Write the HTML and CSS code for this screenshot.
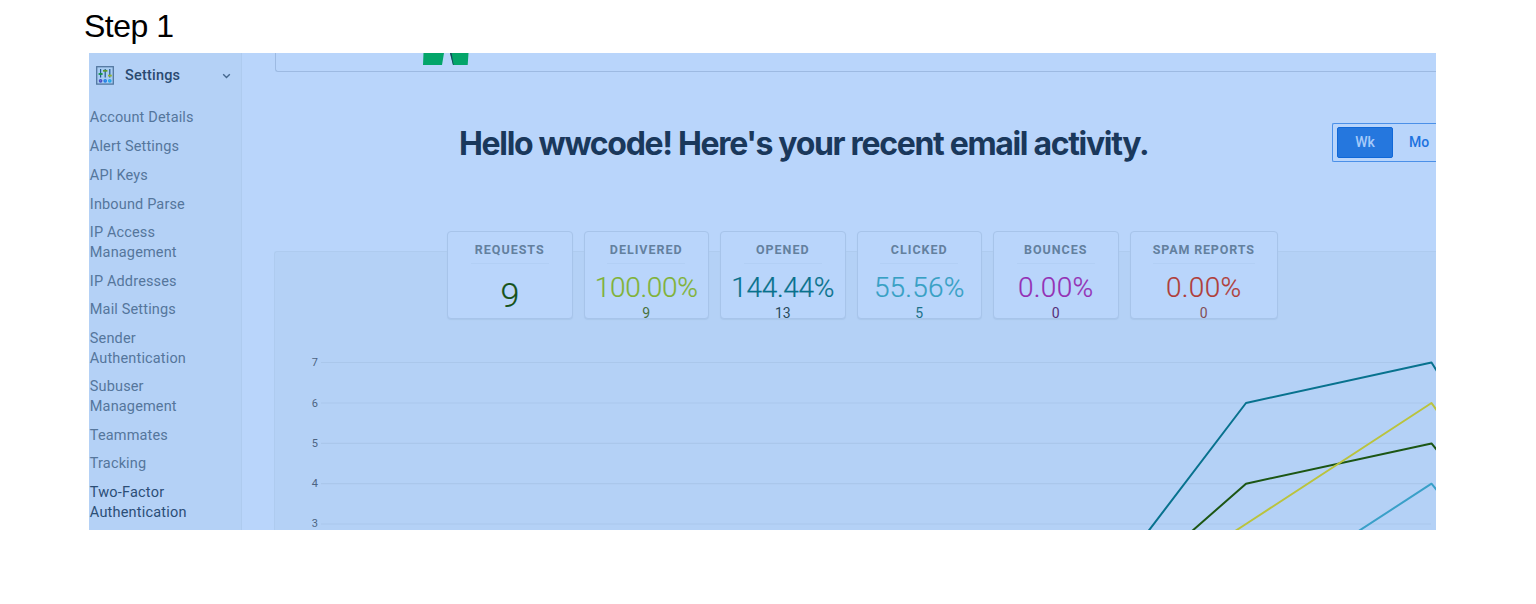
FILE: index.html
```html
<!DOCTYPE html>
<html lang="en">
<head>
<meta charset="utf-8">
<title>Step 1</title>
<link rel="stylesheet" href="styles.css">
</head>
<body>
<h2 class="step">Step 1</h2>
<div class="app">
  <nav class="sidebar">
    <div class="sidebar-head">
      <svg class="settings-icon" width="18" height="19" viewBox="0 0 18 19">
        <rect x="0.7" y="0.7" width="16.6" height="17.4" fill="#a9cdf3" stroke="#52779f" stroke-width="1.3"/>
        <g fill="none" stroke-width="1.2">
          <path stroke="#24588a" d="M4.6 3v8.5M9.2 3v8.5M13.8 3v8.5"/>
          <path stroke="#139344" stroke-width="1.8" d="M2.6 8h4"/>
          <path stroke="#5d9b29" stroke-width="1.8" d="M7 4.800h4.400"/>
          <path stroke="#94b62c" stroke-width="1.8" d="M12 9.600h3.800"/>
          <circle cx="4.6" cy="14.8" r="1.1" stroke-width="1.5" stroke="#4b4fc4"/>
          <circle cx="9.2" cy="14.8" r="1.1" stroke-width="1.5" stroke="#2380e5"/>
          <circle cx="13.8" cy="14.8" r="1.1" stroke-width="1.5" stroke="#23a7e8"/>
        </g>
      </svg>
      <span class="sidebar-title">Settings</span>
      <svg class="chevron" width="9" height="6" viewBox="0 0 9 6"><path d="M1.200 1.200 4.500 4.400 7.800 1.200" fill="none" stroke="#45678d" stroke-width="1.4"/></svg>
    </div>
    <ul class="links">
      <li>Account Details</li>
      <li>Alert Settings</li>
      <li>API Keys</li>
      <li>Inbound Parse</li>
      <li>IP Access<br>Management</li>
      <li>IP Addresses</li>
      <li>Mail Settings</li>
      <li>Sender<br>Authentication</li>
      <li>Subuser<br>Management</li>
      <li>Teammates</li>
      <li>Tracking</li>
      <li class="active">Two-Factor<br>Authentication</li>
    </ul>
  </nav>
  <main class="main">
    <div class="banner">
      <svg width="46" height="12" viewBox="0 0 46 12"><path fill="#03a569" d="M.5 0h20.500l-2 12H0zM27 0h18.500l-.8 12H30z"/><path fill="#16465f" d="M27 0h1.500l2.200 12H30z"/></svg>
    </div>
    <div class="intro">
      <h1 class="greeting">Hello wwcode! Here's your recent email activity.</h1>
      <div class="range"><span class="range-item selected">Wk</span><span class="range-item">Mo</span></div>
    </div>
    <div class="cards">
      <div class="card requests"><h3>REQUESTS</h3><b>9</b></div>
      <div class="card delivered"><h3>DELIVERED</h3><b>100.00%</b><i>9</i></div>
      <div class="card opened"><h3>OPENED</h3><b>144.44%</b><i>13</i></div>
      <div class="card clicked"><h3>CLICKED</h3><b>55.56%</b><i>5</i></div>
      <div class="card bounces"><h3>BOUNCES</h3><b>0.00%</b><i>0</i></div>
      <div class="card spam"><h3>SPAM REPORTS</h3><b>0.00%</b><i>0</i></div>
    </div>
    <div class="panel">
      <svg class="chart" width="1161" height="278" viewBox="275 252 1161 278">
        <path class="grid" d="M321 362.500H1431M321 403H1431M321 443.400H1431M321 483.700H1431M321 524H1431"/>
        <g class="axis">
          <text x="318" y="365.500">7</text>
          <text x="318" y="406.500">6</text>
          <text x="318" y="446.500">5</text>
          <text x="318" y="487">4</text>
          <text x="318" y="527">3</text>
        </g>
        <g class="series">
          <path stroke="#3aa0c8" d="M1334 547 1431.500 483.700 1445 500"/>
          <path stroke="#1c5614" d="M1175 546 1246 483.700 1431.500 443.400 1445 460"/>
          <path stroke="#bac33d" d="M1209 548 1246 524 1431.500 403 1445 422"/>
          <path stroke="#08728e" d="M1137 546 1246 403 1431.500 362.500 1445 384"/>
        </g>
      </svg>
    </div>
  </main>
</div>
</body>
</html>
```
FILE: styles.css
```css
body { margin: 0; background: #fff; font-family: Roboto, "Liberation Sans", sans-serif; }
.step { margin: 0; padding: 8px 0 0 84px; height: 53px; box-sizing: border-box; font: 400 32px/37px "Liberation Sans", Arial, sans-serif; letter-spacing: -0.5px; color: #000; }
.app { display: flex; width: 1347px; height: 477px; margin-left: 89px; overflow: hidden; background: #b9d5fb; }
.sidebar { flex: none; box-sizing: border-box; width: 153px; background: #b4d1f6; border-right: 1px solid #aecbef; }
.sidebar-head { display: flex; align-items: center; height: 45px; padding: 0 9px 0 7px; }
.sidebar-title { flex: 1; margin-left: 11px; font-size: 14.5px; font-weight: 500; letter-spacing: 0.2px; color: #2a4a70; }
.links { list-style: none; margin: 0; padding: 10.3px 0 0 0.8px; display: grid; gap: 9.27px; font-size: 14.5px; line-height: 19.5px; letter-spacing: 0.15px; color: #55769c; }
.active { color: #2b4e76; letter-spacing: 0.2px; }
.main { flex: 1; min-width: 0; display: flex; flex-direction: column; }
.banner { box-sizing: border-box; height: 19px; margin-left: 32.5px; padding-left: 147px; border: solid #9dbae2; border-width: 0 0 1.5px 1px; border-bottom-left-radius: 3px; }
.banner svg { display: block; }
.chevron { margin-right: 1px; }
.intro { display: flex; box-sizing: border-box; height: 159px; padding: 51px 0 0 217px; }
.greeting { flex: 1; margin: 0; padding-top: 1px; font-family: Inter, Roboto, sans-serif; font-size: 32px; line-height: 40px; font-weight: 700; letter-spacing: -1.33px; white-space: nowrap; color: #1a385b; }
.range { display: flex; box-sizing: border-box; width: 104px; height: 39px; padding: 3px 0 3px 4px; border: 1px solid #4b90e8; border-right: 0; border-radius: 2px 0 0 2px; font-size: 14px; font-weight: 500; line-height: 30px; color: #1d72df; overflow: hidden; }
.range-item { flex: none; width: 52px; text-align: center; }
.selected { box-sizing: border-box; width: 56px; height: 31px; line-height: 28px; border: 1px solid #1068d8; border-radius: 2px; background: #2577de; color: #a5cafa; }
.cards { position: relative; display: flex; gap: 11px; height: 88.5px; padding-left: 205px; }
.card { box-sizing: border-box; width: 125.5px; height: 88px; display: flex; flex-direction: column; align-items: center; border: 1px solid #a7c4ea; border-radius: 4px; background: #b9d5fb; box-shadow: 0 1px 1px #a9c7ec; }
.card h3 { box-sizing: border-box; height: 32px; margin: 0; padding: 7px 0; min-width: 78px; text-align: center; border-bottom: 1px solid #b2cff5; font-size: 12.5px; line-height: 21px; font-weight: 700; letter-spacing: 1px; color: #63809e; }
.card b { font-size: 28px; line-height: 34px; margin-top: 7px; font-weight: 300; letter-spacing: -0.3px; -webkit-text-stroke: 0.2px currentColor; }
.card i { font-size: 14px; line-height: 16px; font-style: normal; font-weight: 400; }
.card.requests b { font-size: 34px; margin-top: 14px; color: #155217; }
.delivered b { color: #80b236; }
.delivered i { color: #48713d; }
.opened b { color: #08718c; }
.opened i { color: #294a5c; }
.card.clicked b { color: #36a0c4; letter-spacing: 0.2px; }
.clicked i { color: #1c7189; }
.bounces b { color: #942fb4; }
.bounces i { color: #562e79; }
.card.spam { width: 148.5px; }
.card.spam h3 { letter-spacing: 0.85px; }
.spam b { color: #b03d38; }
.spam i { color: #834e56; }
.card.bounces b, .card.spam b { letter-spacing: 0.3px; }
.panel { flex: none; height: 279px; box-sizing: border-box; margin: -68.5px 0 0 32px; border: solid #aecbef; border-width: 1px 0 0 1px; border-top-left-radius: 3px; background: #b4d1f6; }
.chart { display: block; }
.grid { stroke: #aac7eb; stroke-width: 1.2; fill: none; }
.axis { font-size: 11px; text-anchor: end; fill: #4c6483; }
.series { fill: none; stroke-width: 2; stroke-linejoin: round; }
```
